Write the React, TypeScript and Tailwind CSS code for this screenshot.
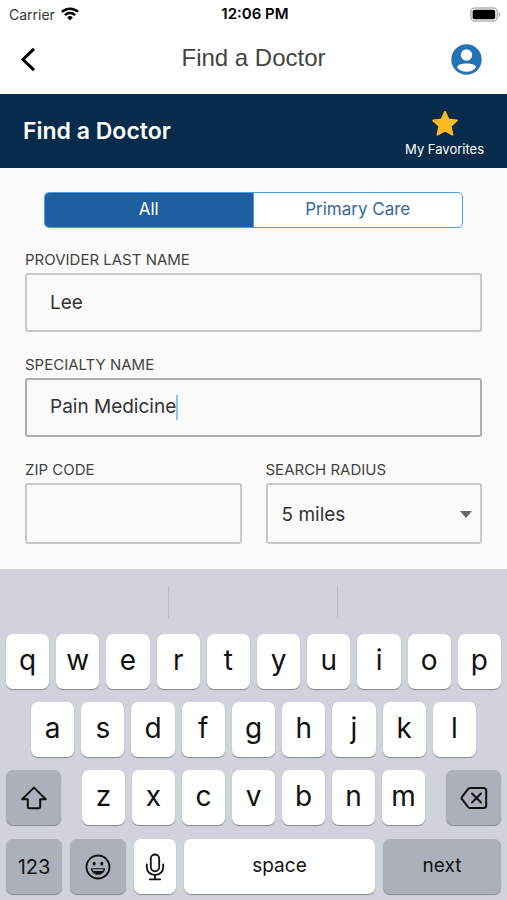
import { useState, type ReactNode } from "react";

const TOP_ROW = ["q", "w", "e", "r", "t", "y", "u", "i", "o", "p"];
const HOME_ROW = ["a", "s", "d", "f", "g", "h", "j", "k", "l"];
const BOTTOM_ROW = ["z", "x", "c", "v", "b", "n", "m"];

function WifiIcon() {
  return (
    <svg className="h-[14px] w-[18px]" viewBox="0 0 18 14" fill="none" stroke="#000" strokeWidth="2.5" aria-hidden="true">
      <path d="M.9 4.900a11.700 11.700 0 0 1 16.200 0" />
      <path d="M3.900 8.100a7.400 7.400 0 0 1 10.200 0" />
      <path d="M6.200 10.400a4.100 4.100 0 0 1 5.600 0L9 13.400z" fill="#000" stroke="none" />
    </svg>
  );
}

function BatteryIcon() {
  return (
    <svg className="h-[15px] w-[31px]" viewBox="0 0 31 15" aria-hidden="true">
      <rect x="0.9" y="0.9" width="26.4" height="13.2" rx="4" fill="#fff" stroke="#b4b4b4" strokeWidth="1.5" />
      <rect x="2.6" y="2.8" width="22.6" height="9.4" rx="2" fill="#000" />
      <path d="M28.600 5v5c1.200-.4 1.900-1.400 1.900-2.500S29.800 5.400 28.600 5z" fill="#b4b4b4" />
    </svg>
  );
}

function BackIcon() {
  return (
    <svg className="h-[25px] w-[16px]" viewBox="0 0 16 25" fill="none" stroke="#000" strokeWidth="3" aria-hidden="true">
      <path d="M14 1.800 3 12.500 14 23.200" />
    </svg>
  );
}

function ProfileIcon() {
  return (
    <svg className="size-[31px]" viewBox="0 0 31 31" aria-hidden="true">
      <circle cx="15.500" cy="15.500" r="15.200" fill="#2474b5" />
      <circle cx="15.500" cy="11" r="5.700" fill="#fff" />
      <path d="M6 23.200c0-2.300 4.600-3.700 9.500-3.700s9.500 1.400 9.500 3.700c-2.100 2.900-5.600 4.600-9.500 4.600S8.100 26.100 6 23.200z" fill="#fff" />
    </svg>
  );
}

function StarIcon() {
  return (
    <svg className="h-[27px] w-[28px]" viewBox="0 0 28 27" aria-hidden="true">
      <path
        d="M14 2 17.400 9.500 25.800 10.400 19.600 15.900 21.400 24.700 14 20.400 6.600 24.700 8.400 15.900 2.200 10.400 10.600 9.500z"
        fill="#fdb924"
        stroke="#fdb924"
        strokeWidth="2"
        strokeLinejoin="round"
      />
    </svg>
  );
}

function ShiftIcon() {
  return (
    <svg className="h-[24px] w-[28px]" viewBox="0 0 28 24" fill="none" stroke="#111" strokeWidth="2" strokeLinejoin="round" aria-hidden="true">
      <path d="M14 1.600 2.200 13.200h5.600v7.600c0 .9.500 1.400 1.400 1.400h9.600c.9 0 1.400-.5 1.400-1.400v-7.600h5.600z" />
    </svg>
  );
}

function BackspaceIcon() {
  return (
    <svg className="h-[24px] w-[28px]" viewBox="0 0 28 24" fill="none" stroke="#111" strokeWidth="2" strokeLinejoin="round" strokeLinecap="round" aria-hidden="true">
      <path d="M10.200 2h13.300c1.700 0 2.700 1 2.700 2.700v14.600c0 1.700-1 2.700-2.700 2.700H10.200c-.8 0-1.400-.3-2-.9L2 13.200c-.6-.8-.6-1.600 0-2.400l6.200-7.900c.6-.6 1.200-.9 2-.9z" />
      <path d="m12 7.500 9 9m0-9-9 9" />
    </svg>
  );
}

function EmojiIcon() {
  return (
    <svg className="size-[26px]" viewBox="0 0 26 26" aria-hidden="true">
      <circle cx="13" cy="13" r="11.500" fill="none" stroke="#111" strokeWidth="1.800" />
      <ellipse cx="9.200" cy="9.700" rx="1.500" ry="1.900" fill="#111" />
      <ellipse cx="16.800" cy="9.700" rx="1.500" ry="1.900" fill="#111" />
      <path d="M5.800 14.200h14.400c-.3 4-3.300 6.600-7.200 6.600s-6.900-2.600-7.200-6.600z" fill="#111" />
      <path d="M7.400 15.200h11.200c-.2.900-.5 1.400-.9 1.800H8.300c-.4-.4-.7-.9-.9-1.800z" fill="#aab0bb" />
    </svg>
  );
}

function MicIcon() {
  return (
    <svg className="h-[28px] w-[20px]" viewBox="0 0 20 28" fill="none" stroke="#111" strokeWidth="1.800" strokeLinecap="round" aria-hidden="true">
      <rect x="5.800" y="1.500" width="8.400" height="16.800" rx="4.200" />
      <path d="M1.800 11.500v2.700c0 4.500 3.400 7.700 8.200 7.700s8.200-3.200 8.200-7.700v-2.700" />
      <path d="M10 22v4M4.800 26.300h10.400" />
    </svg>
  );
}

type KeyProps = {
  children: ReactNode;
  label?: string;
  className: string;
};

function Key({ children, label, className }: KeyProps) {
  return (
    <button
      type="button"
      aria-label={label}
      className={`flex h-[55px] items-center justify-center rounded-[7px] text-[#111] shadow-[0_1px_1px_#868a91] ${className}`}
    >
      {children}
    </button>
  );
}

function LetterKey({ letter }: { letter: string }) {
  return (
    <Key className="min-w-0 flex-1 bg-white pb-1 text-[28px] leading-8">
      {letter}
    </Key>
  );
}

function Keyboard() {
  return (
    <section aria-label="Keyboard" className="flex flex-col bg-[#d0d3db] pb-[6px]">
      <div className="grid h-[65px] grid-cols-3 items-center divide-x divide-[#bbbec5]">
        <span className="h-8" />
        <span className="h-8" />
        <span className="h-8" />
      </div>
      <div className="flex flex-col gap-[13px]">
        <div className="flex gap-[7px] px-[6px]">
          {TOP_ROW.map((k) => (
            <LetterKey key={k} letter={k} />
          ))}
        </div>
        <div className="flex gap-[7px] px-[31px]">
          {HOME_ROW.map((k) => (
            <LetterKey key={k} letter={k} />
          ))}
        </div>
        <div className="flex gap-[21px] px-[6px]">
          <Key label="Shift" className="w-[55px] bg-[#abb0bb]">
            <ShiftIcon />
          </Key>
          <div className="flex min-w-0 flex-1 gap-[7px]">
            {BOTTOM_ROW.map((k) => (
              <LetterKey key={k} letter={k} />
            ))}
          </div>
          <Key label="Delete" className="w-[55px] bg-[#abb0bb]">
            <BackspaceIcon />
          </Key>
        </div>
        <div className="mt-px flex gap-[8px] px-[6px]">
          <Key className="w-[56px] bg-[#abb0bb] text-[20px]">123</Key>
          <Key label="Emoji" className="w-[56px] bg-[#abb0bb]">
            <EmojiIcon />
          </Key>
          <Key label="Dictate" className="w-[42px] bg-white">
            <MicIcon />
          </Key>
          <Key className="min-w-0 flex-1 bg-white pb-px text-[19px]">space</Key>
          <Key className="w-[118px] bg-[#abb0bb] pb-px text-[19px]">next</Key>
        </div>
      </div>
    </section>
  );
}

export default function App() {
  const [filter, setFilter] = useState("all");

  return (
    <div className="flex min-h-screen flex-col bg-[#fafafa] font-['Inter','Liberation_Sans',sans-serif] text-[#333]">
      <div className="grid h-7 grid-cols-3 items-center bg-white pr-[6px] pl-[9px] text-[15px] text-black">
        <div className="flex items-center gap-[6px] text-[14px] text-[#333]">
          <span>Carrier</span>
          <WifiIcon />
        </div>
        <time className="text-center font-semibold whitespace-nowrap">12:06 PM</time>
        <div className="flex justify-end">
          <BatteryIcon />
        </div>
      </div>

      <header className="grid h-[66px] grid-cols-[48px_1fr_48px] items-center bg-white pb-[3px]">
        <button type="button" aria-label="Back" className="pl-5">
          <BackIcon />
        </button>
        <h1 className="pb-[3px] text-center font-['Liberation_Sans',Arial,sans-serif] text-[24px] text-[#444]">Find a Doctor</h1>
        <button type="button" aria-label="Profile" className="-ml-2">
          <ProfileIcon />
        </button>
      </header>

      <div className="flex h-[74px] items-center justify-between bg-[#072b4b] px-[23px] text-white">
        <h2 className="text-[23px] font-semibold">Find a Doctor</h2>
        <button type="button" className="flex flex-col items-center gap-[2px] pt-[6px] text-[13px] leading-5">
          <StarIcon />
          My Favorites
        </button>
      </div>

      <form className="flex flex-1 flex-col px-[25px] pt-6" onSubmit={(e) => e.preventDefault()}>
        <div className="mx-[19px] grid h-9 grid-cols-2 overflow-hidden rounded-[5px] border border-[#4a9fe8] bg-white text-[17px]">
          <button
            type="button"
            aria-pressed={filter === "all"}
            onClick={() => setFilter("all")}
            className="border-r border-[#4a9fe8] text-[#35699f] aria-pressed:bg-[#1f5f9f] aria-pressed:text-white"
          >
            All
          </button>
          <button
            type="button"
            aria-pressed={filter === "primary"}
            onClick={() => setFilter("primary")}
            className="text-[#35699f] aria-pressed:bg-[#1f5f9f] aria-pressed:text-white"
          >
            Primary Care
          </button>
        </div>

        <label htmlFor="lastName" className="mt-5 mb-px text-[15px] leading-6 text-[#444]">
          PROVIDER LAST NAME
        </label>
        <input
          id="lastName"
          defaultValue="Lee"
          className="h-[59px] rounded-[3px] border-2 border-[#c8c8c8] bg-transparent px-[23px] text-[19px] outline-none"
        />

        <label htmlFor="specialty" className="mt-[21px] mb-px text-[15px] leading-6 text-[#444]">
          SPECIALTY NAME
        </label>
        <div className="flex h-[59px] items-center rounded-[3px] border-2 border-[#adadad] px-[23px]">
          <input
            id="specialty"
            defaultValue="Pain Medicine"
            className="field-sizing-content bg-transparent text-[19px] outline-none"
          />
          <span className="h-[25px] w-[2px] bg-[#8cc4f5]" />
        </div>

        <div className="mt-[21px] mb-6 grid grid-cols-2 gap-6">
          <div className="flex flex-col">
            <label htmlFor="zip" className="mb-px text-[15px] leading-6 text-[#444]">
              ZIP CODE
            </label>
            <input
              id="zip"
              className="h-[61px] w-full rounded-[3px] border-2 border-[#c8c8c8] bg-transparent px-[23px] text-[19px] outline-none"
            />
          </div>
          <div className="flex flex-col">
            <label htmlFor="radius" className="mb-px text-[15px] leading-6 text-[#444]">
              SEARCH RADIUS
            </label>
            <div className="relative">
              <select
                id="radius"
                defaultValue="5"
                className="h-[61px] w-full appearance-none rounded-[3px] border-2 border-[#c8c8c8] bg-transparent px-[14px] pt-[3px] text-[19px] outline-none"
              >
                <option value="5">5 miles</option>
                <option value="10">10 miles</option>
                <option value="25">25 miles</option>
              </select>
              <svg className="pointer-events-none absolute top-[28px] right-[10px] h-[7px] w-[12px]" viewBox="0 0 12 7" aria-hidden="true">
                <path d="M0 0h12L6 7z" fill="#666" />
              </svg>
            </div>
          </div>
        </div>
      </form>

      <Keyboard />
    </div>
  );
}
